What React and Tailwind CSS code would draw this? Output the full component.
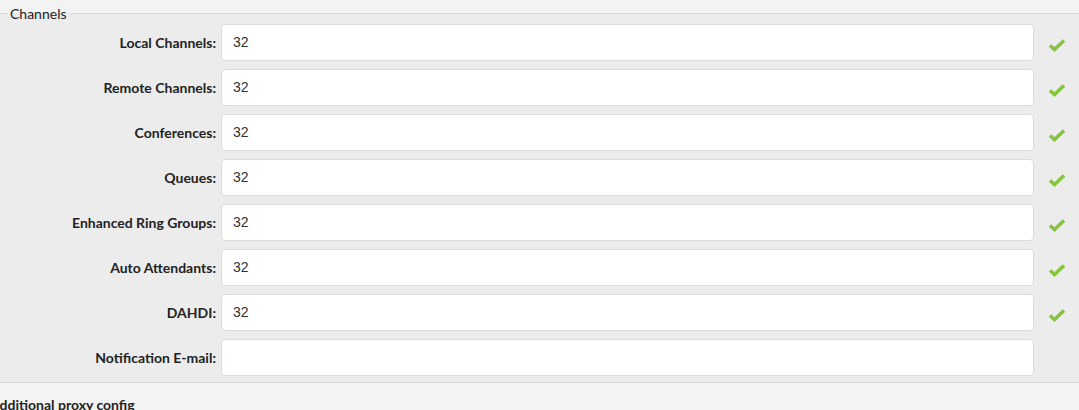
import React from "react";

const rows = [
  { label: "Local Channels:", value: "32", ok: true },
  { label: "Remote Channels:", value: "32", ok: true },
  { label: "Conferences:", value: "32", ok: true },
  { label: "Queues:", value: "32", ok: true },
  { label: "Enhanced Ring Groups:", value: "32", ok: true },
  { label: "Auto Attendants:", value: "32", ok: true },
  { label: "DAHDI:", value: "32", ok: true },
  { label: "Notification E-mail:", value: "", ok: false },
];

function Check() {
  return (
    <svg width="18" height="14" viewBox="0 0 18 14" className="block">
      <path d="M2 7.5 L6.5 11.5 L16 2.5" fill="none" stroke="#86c440" strokeWidth="3.6" strokeLinecap="butt" strokeLinejoin="miter" />
    </svg>
  );
}

export default function App() {
  return (
    <div className="w-[1079px] h-[410px] overflow-hidden bg-[#f3f3f3] text-[#222] font-['Lato','Noto_Sans',sans-serif] text-[14px]">
      <fieldset className="mt-[6px] bg-[#ececec] border-y border-x-0 border-[#d6d6d6] pb-[6px]">
        <legend className="ml-[7px] px-[3px] leading-[15px]">Channels</legend>
        {/* Rows */}
        <div className="pt-[3px] flex flex-col gap-[8px]">
          {rows.map((r) => (
            <div key={r.label} className="flex items-center h-[37px]">
              <label className="w-[216px] text-right font-bold">{r.label}</label>
              <div className="ml-[5px] flex-1 h-[37px] bg-white border border-[#dcdcdc] rounded-[4px] flex items-center pl-[11px] font-['Liberation_Sans',Arial,sans-serif] text-[14px] text-[#333]">
                {r.value}
              </div>
              <div className="w-[45px] pl-[14px] pt-[4px]">{r.ok && <Check />}</div>
            </div>
          ))}
        </div>
      </fieldset>
      <div className="mt-[14px] -ml-[10px] font-bold text-[14px] leading-[16px]">Additional proxy config</div>
    </div>
  );
}
